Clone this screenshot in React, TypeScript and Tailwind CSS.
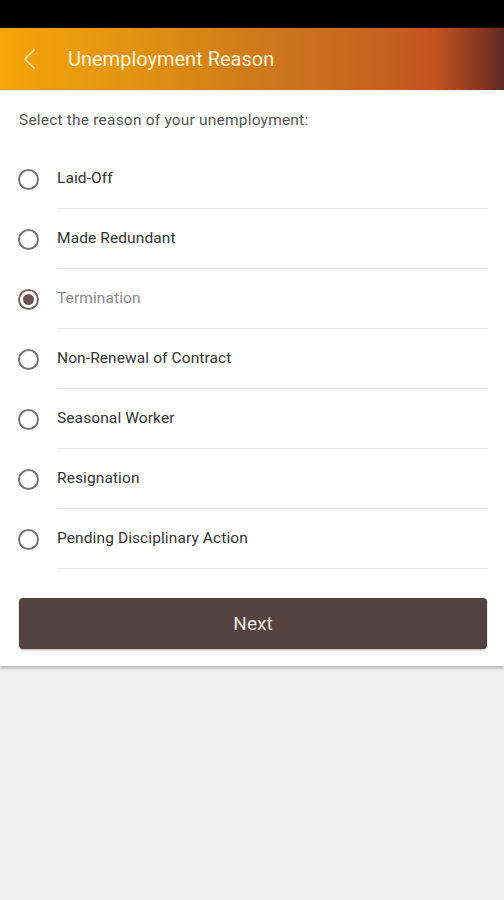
import { useState } from 'react';

const reasons = [
  'Laid-Off',
  'Made Redundant',
  'Termination',
  'Non-Renewal of Contract',
  'Seasonal Worker',
  'Resignation',
  'Pending Disciplinary Action',
];

export default function App() {
  const [selected, setSelected] = useState('Termination');

  return (
    <div
      className="min-h-[900px] bg-[#eeeeee]"
      style={{ fontFamily: 'Roboto, "Liberation Sans", sans-serif' }}
    >
      {/* Status bar */}
      <div className="h-[28px] bg-black" />

      {/* Header */}
      <div className="h-[62px] flex items-center bg-[linear-gradient(90deg,#f6a50a_0%,#e39410_25%,#cf7a1b_50%,#c56420_75%,#c4531f_86%,#7a3222_97%,#5c2a20_100%)]">
        <svg className="ml-[23px]" width="14" height="22" viewBox="0 0 14 22" fill="none">
          <path d="M11 2 L2 11 L11 20" stroke="#fde7ad" strokeWidth="1.6" strokeLinecap="round" strokeLinejoin="round" />
        </svg>
        <h1 className="ml-[31px] text-[20px] text-[#fff4dc]">Unemployment Reason</h1>
      </div>

      {/* Card */}
      <div className="bg-white shadow-[0_2px_3px_rgba(0,0,0,0.25)] pb-[17px]">
        <p className="pl-[19px] pt-[19px] text-[15.5px] tracking-[0.2px] text-[#555555]">Select the reason of your unemployment:</p>

        <div className="mt-[17px]">
          {reasons.map((r) => {
            const active = r === selected;
            return (
              <button
                key={r}
                onClick={() => setSelected(r)}
                className="w-full flex items-stretch h-[60px] text-left"
              >
                <div className="w-[57px] flex items-center pl-[18px]">
                  <div
                    className={
                      active
                        ? 'w-[21px] h-[21px] rounded-full border-2 border-[#7b6865] flex items-center justify-center'
                        : 'w-[21px] h-[21px] rounded-full border-2 border-[#757575]'
                    }
                  >
                    {active && <div className="w-[11px] h-[11px] rounded-full bg-[#6b5552]" />}
                  </div>
                </div>
                <div className="flex-1 mr-[16px] flex items-center border-b border-[#e6e6e6]">
                  <span
                    className={
                      active
                        ? 'text-[15.5px] tracking-[0.1px] text-[#8a8a8a]'
                        : 'text-[15.5px] tracking-[0.1px] text-[#333333]'
                    }
                  >
                    {r}
                  </span>
                </div>
              </button>
            );
          })}
        </div>

        <div className="px-[19px] mt-[29px] pr-[17px]">
          <button className="w-full h-[51px] rounded-[4px] bg-[#54423f] text-[19px] text-[#eeeae8] shadow-[0_1px_2px_rgba(0,0,0,0.3)]">
            Next
          </button>
        </div>
      </div>
    </div>
  );
}
